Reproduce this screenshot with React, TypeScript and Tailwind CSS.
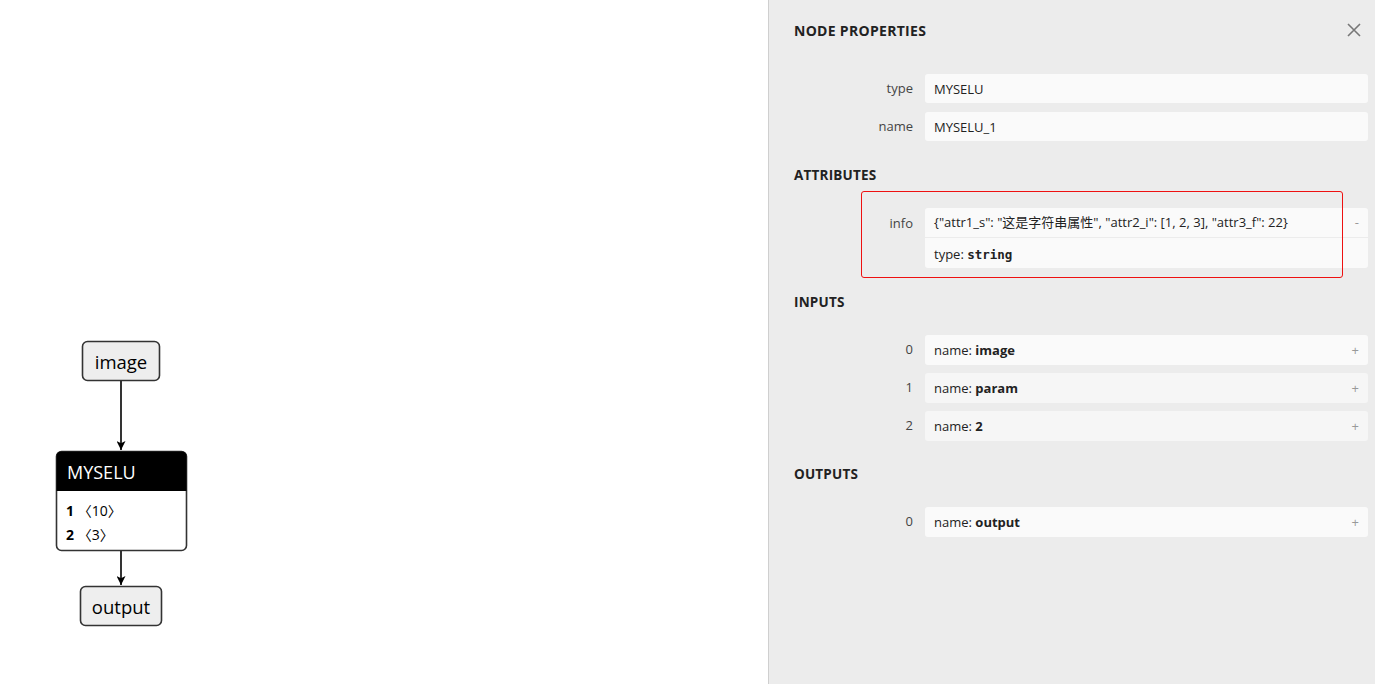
import React from "react";

const font = { fontFamily: '"Open Sans", "Noto Sans CJK SC", sans-serif' };

function Graph() {
  return (
    <svg width="768" height="684" viewBox="0 0 768 684" className="block" style={font}>
      <defs>
        <marker id="arr" viewBox="0 0 10 10" refX="10" refY="5" markerWidth="9" markerHeight="9" markerUnits="userSpaceOnUse" orient="auto">
          <path d="M0,0 L10,5 L0,10 L2.5,5 z" fill="#000" />
        </marker>
      </defs>
      <line x1="121" y1="381" x2="121" y2="450" stroke="#000" strokeWidth="1.6" markerEnd="url(#arr)" />
      <line x1="121" y1="551" x2="121" y2="585" stroke="#000" strokeWidth="1.6" markerEnd="url(#arr)" />
      <rect x="82.5" y="341.5" width="77" height="39" rx="5" fill="#eeeeee" stroke="#333" strokeWidth="1.6" />
      <text x="121" y="369" textAnchor="middle" fontSize="18.5" fill="#000">image</text>
      <rect x="56.5" y="451.5" width="130" height="99" rx="5" fill="#fff" stroke="#333" strokeWidth="1.6" />
      <path d="M56.5,491 L56.5,456.5 Q56.5,451.5 61.5,451.5 L181.5,451.5 Q186.5,451.5 186.5,456.5 L186.5,491 Z" fill="#000" />
      <text x="67" y="479" fontSize="18" fill="#fff">MYSELU</text>
      <text x="66" y="516" fontSize="14" fill="#000"><tspan fontWeight="700">1</tspan><tspan> 〈10〉</tspan></text>
      <text x="66" y="540" fontSize="14" fill="#000"><tspan fontWeight="700">2</tspan><tspan> 〈3〉</tspan></text>
      <rect x="80.5" y="586.5" width="81" height="39" rx="5" fill="#eeeeee" stroke="#333" strokeWidth="1.6" />
      <text x="121" y="614" textAnchor="middle" fontSize="18.5" fill="#000">output</text>
    </svg>
  );
}

function Line({ children, mark, bg }: { children: React.ReactNode; mark?: string; bg?: string }) {
  return (
    <div className={`flex h-[30px] items-center rounded-[3px] pl-[9px] pr-[9px] pt-[2px] text-[13px] text-[#222] ${bg ?? "bg-[#fafafa]"}`}>
      <div className="flex-1 whitespace-nowrap">{children}</div>
      {mark && <span className="text-[13px] text-[#999]">{mark}</span>}
    </div>
  );
}

function IndexRow({ label, children, bg }: { label: string; children: React.ReactNode; bg?: string }) {
  return (
    <div className="flex items-center">
      <div className="w-[119px] shrink-0 text-right text-[13px] text-[#444]">{label}</div>
      <div className="ml-[12px] flex-1">
        <Line mark="+" bg={bg}>{children}</Line>
      </div>
    </div>
  );
}

function Section({ title }: { title: string }) {
  return <div className="text-[13.5px] font-bold leading-[20px] tracking-[0.2px] text-[#222]">{title}</div>;
}

export default function App() {
  return (
    <div className="flex h-[684px] w-[1375px] overflow-hidden bg-white" style={font}>
      <div className="w-[768px] shrink-0 bg-white">
        <Graph />
      </div>
      <div className="relative flex-1 border-l border-[#cfcfcf] bg-[#ececec] pl-[25px] pr-[7px]">
        <div className="flex h-[60px] items-center justify-between">
          <div className="text-[14px] font-bold tracking-[0.3px] text-[#222]">NODE PROPERTIES</div>
          <svg width="14" height="14" viewBox="0 0 14 14" className="mr-[7px]">
            <path d="M1,1 L13,13 M13,1 L1,13" stroke="#777" strokeWidth="1.6" />
          </svg>
        </div>

        <div className="mt-[14px] flex flex-col gap-[9px]">
          <div className="flex items-center">
            <div className="w-[119px] shrink-0 text-right text-[13px] text-[#444]">type</div>
            <div className="ml-[12px] flex h-[29px] flex-1 items-center rounded-[3px] bg-[#fafafa] pl-[9px] pt-[2px] text-[13px] text-[#222]">MYSELU</div>
          </div>
          <div className="flex items-center">
            <div className="w-[119px] shrink-0 text-right text-[13px] text-[#444]">name</div>
            <div className="ml-[12px] flex h-[29px] flex-1 items-center rounded-[3px] bg-[#fafafa] pl-[9px] pt-[2px] text-[13px] text-[#222]">MYSELU_1</div>
          </div>
        </div>

        <div className="mt-[24px]"><Section title="ATTRIBUTES" /></div>

        <div className="mt-[23px] flex items-start">
          <div className="w-[119px] shrink-0 text-right text-[13px] leading-[30px] text-[#444]">info</div>
          <div className="ml-[12px] flex-1 rounded-[3px] bg-[#fafafa]">
            <div className="flex h-[30px] items-center border-b border-[#ececec] pl-[9px] pr-[9px] pt-[1px] text-[13px] text-[#222]">
              <div className="flex-1 whitespace-nowrap">{'{"attr1_s": "这是字符串属性", "attr2_i": [1, 2, 3], "attr3_f": 22}'}</div>
              <span className="text-[13px] text-[#999]">-</span>
            </div>
            <div className="flex h-[30px] items-center pl-[9px] pt-[4px] text-[13px] text-[#222]">
              type:&nbsp;<span className="font-bold" style={{ fontFamily: '"DejaVu Sans Mono", monospace', fontSize: "12.5px" }}>string</span>
            </div>
          </div>
        </div>

        <div className="mt-[24px]"><Section title="INPUTS" /></div>

        <div className="mt-[23px] flex flex-col gap-[8px]">
          <IndexRow label="0">name: <b>image</b></IndexRow>
          <IndexRow label="1" bg="bg-[#f6f6f6]">name: <b>param</b></IndexRow>
          <IndexRow label="2" bg="bg-[#f6f6f6]">name: <b>2</b></IndexRow>
        </div>

        <div className="mt-[23px]"><Section title="OUTPUTS" /></div>

        <div className="mt-[23px] flex flex-col gap-[8px]">
          <IndexRow label="0">name: <b>output</b></IndexRow>
        </div>

        <div className="pointer-events-none absolute left-[92px] top-[191px] h-[87px] w-[482px] rounded-[3px] border border-[#e11]" />
      </div>
    </div>
  );
}
